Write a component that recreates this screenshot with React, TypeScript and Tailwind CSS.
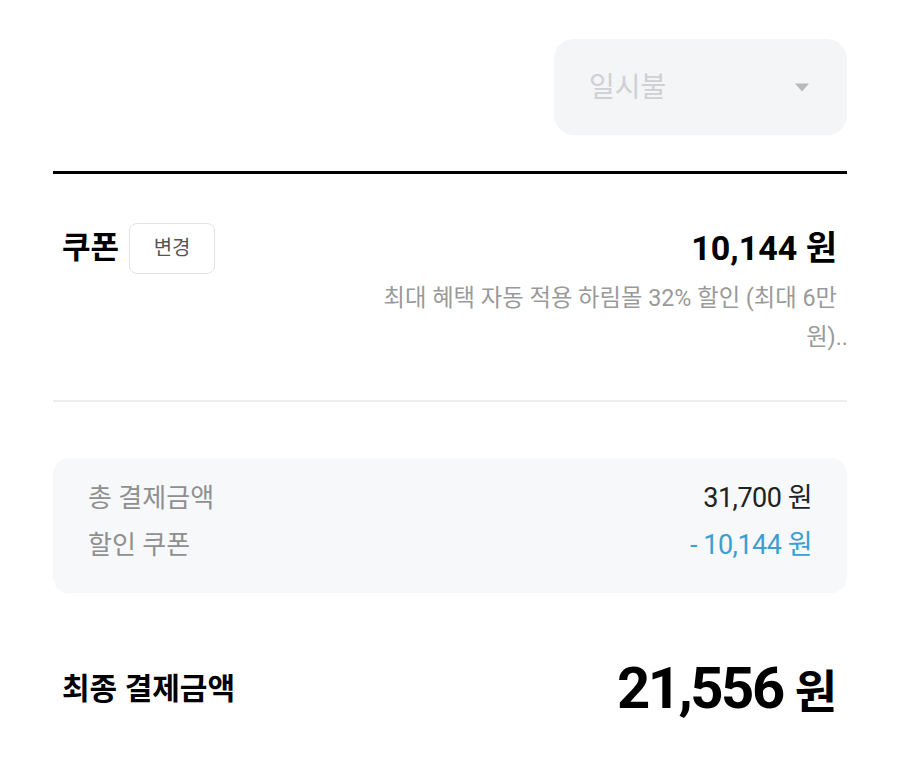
export default function App() {
  const font = { fontFamily: 'Roboto, "Noto Sans CJK KR", sans-serif' };
  return (
    <div className="w-[900px] h-[774px] bg-white overflow-hidden" style={font}>
      <div className="px-[53px] pt-[39px]">
        <div className="flex justify-end">
          <div className="w-[293px] h-[96px] rounded-[20px] bg-[#f4f5f7] flex items-center justify-between pl-[35px] pr-[37px]">
            <span className="text-[28px] text-[#cfd0d3] mt-[2px]">일시불</span>
            <svg width="16" height="9" viewBox="0 0 16 9">
              <path d="M1 0.5 L15 0.5 L8 8.5 Z" fill="#b8b9bc" />
            </svg>
          </div>
        </div>
        <div className="mt-[36px] h-[3px] bg-black" />
        <div className="pt-[49px] pb-[43px] pl-[9px] pr-[10px] flex justify-between">
          <div className="flex items-center h-[50px] gap-[10px]">
            <span className="text-[31px] font-bold text-black">쿠폰</span>
            <button className="w-[86px] h-[51px] rounded-[8px] border border-[#e3e3e3] text-[20px] text-[#555]">변경</button>
          </div>
          <div className="flex flex-col items-end">
            <div className="h-[50px] flex items-center text-[34px] font-bold text-black">10,144 원</div>
            <div className="text-[23.3px] text-[#9a9a9a] text-right leading-[39px] mt-[6px]">
              <div>최대 혜택 자동 적용 하림몰 32% 할인 (최대 6만</div>
              <div className="mr-[-11px]">원)..</div>
            </div>
          </div>
        </div>
        <div className="h-[2px] bg-[#eeeeee]" />
        <div className="mt-[56px] h-[135px] rounded-[16px] bg-[#f7f8fa] px-[35px] pt-[22px] flex flex-col gap-[11px]">
          <div className="flex justify-between items-center h-[36px]">
            <span className="text-[26px] text-[#8f8f8f]">총 결제금액</span>
            <span className="text-[27px] text-[#222] tracking-[-0.5px]">31,700 원</span>
          </div>
          <div className="flex justify-between items-center h-[36px]">
            <span className="text-[26px] text-[#8f8f8f]">할인 쿠폰</span>
            <span className="text-[27px] text-[#3b9fd2] tracking-[-0.5px]">- 10,144 원</span>
          </div>
        </div>
        <div className="mt-[60px] flex justify-between items-center pl-[9px] pr-[10px] h-[70px]">
          <span className="text-[30px] font-bold text-black">최종 결제금액</span>
          <span className="flex items-baseline font-bold text-black leading-none">
            <span className="text-[58px] tracking-[-2.5px]">21,556</span>
            <span className="text-[46px] ml-[12px]">원</span>
          </span>
        </div>
      </div>
    </div>
  );
}
